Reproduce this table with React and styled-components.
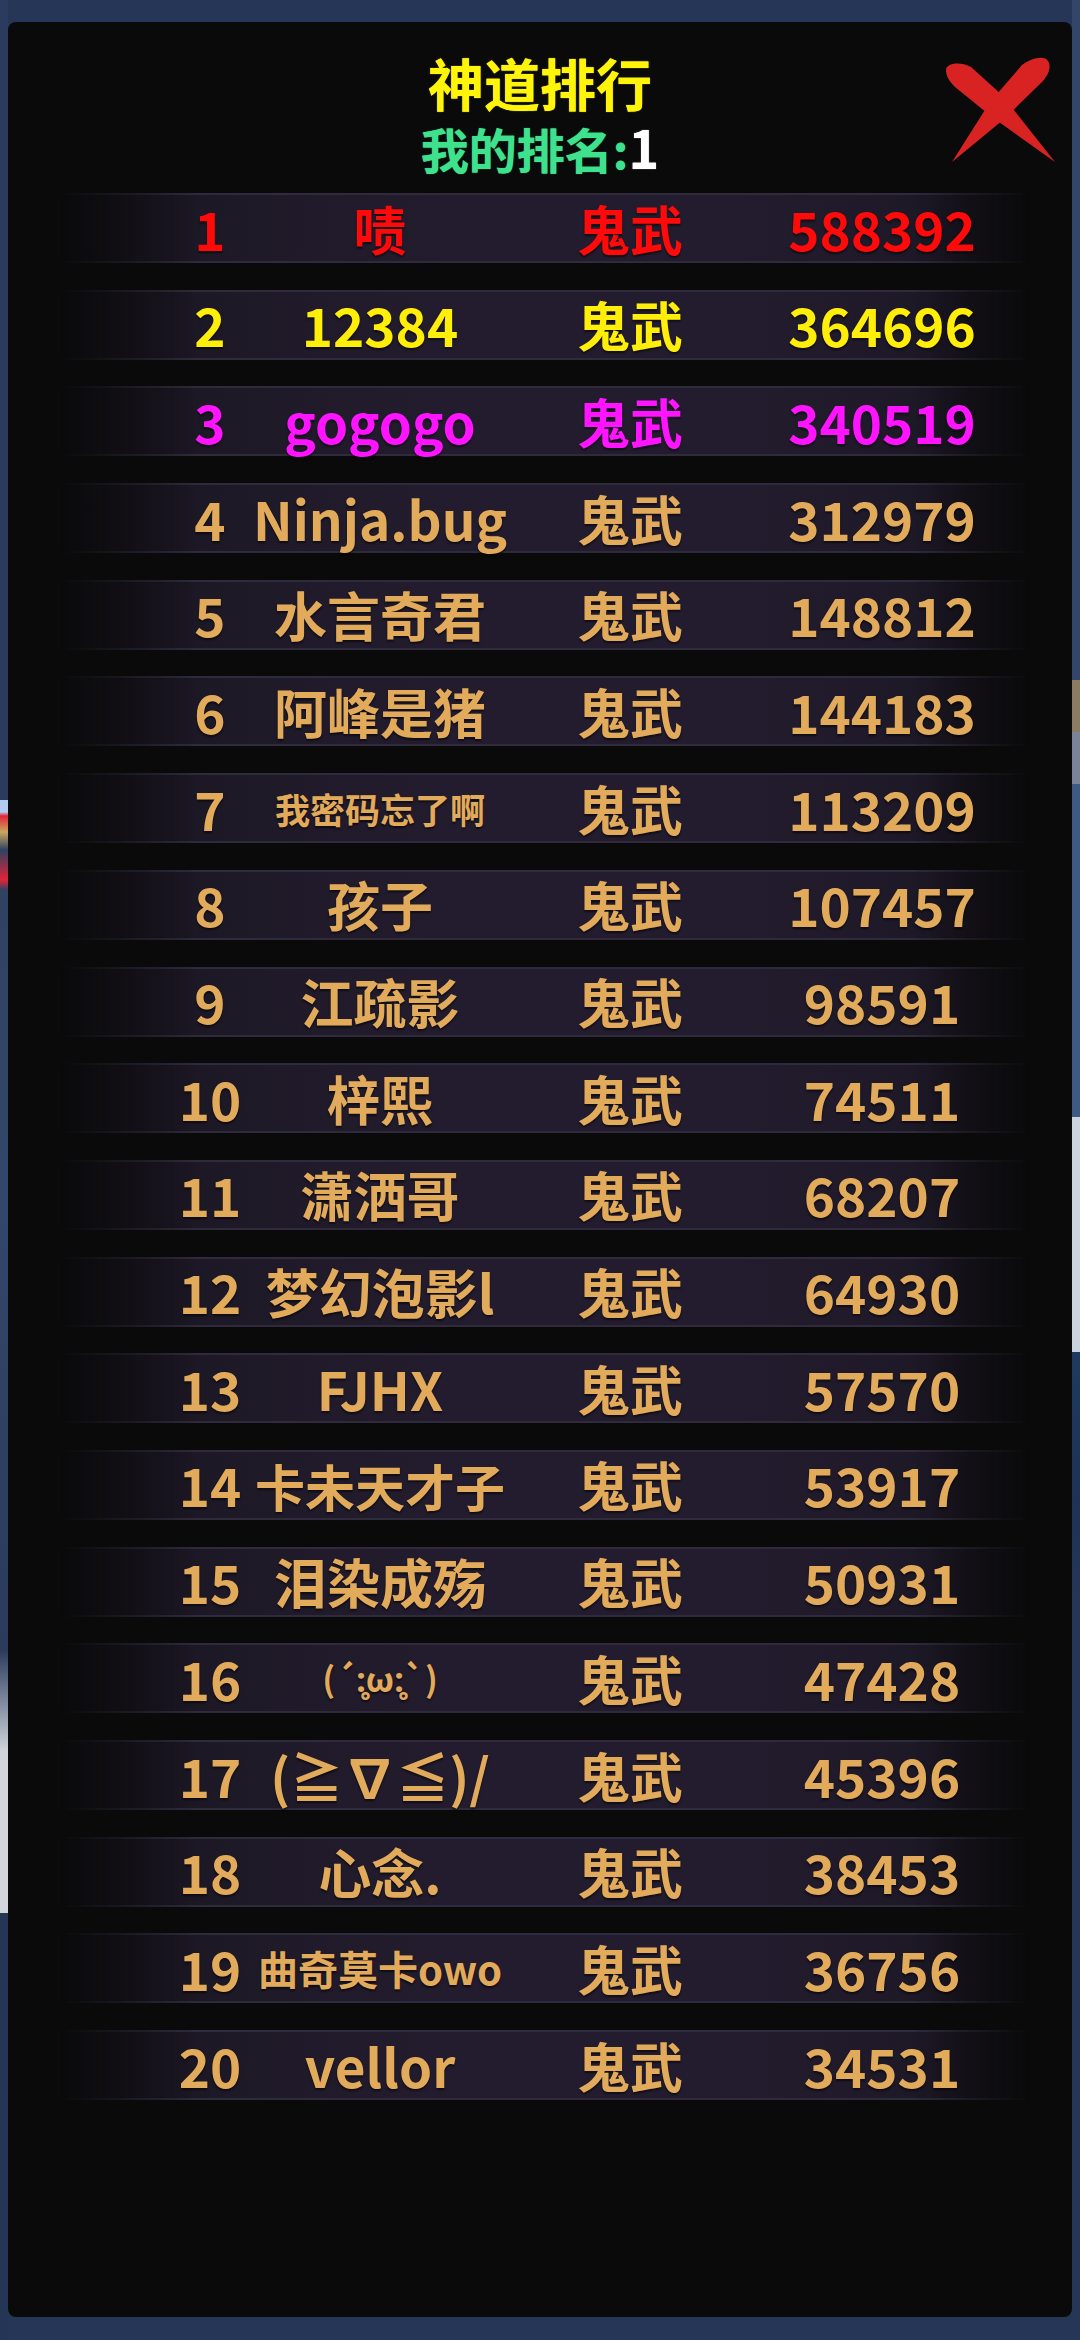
import React from 'react';
import styled, { createGlobalStyle } from 'styled-components';

const GlobalStyle = createGlobalStyle`
  html, body {
    margin: 0;
    padding: 0;
    background: #263656;
  }
  * {
    box-sizing: border-box;
  }
`;

const FONT = `"Noto Sans CJK SC", "Noto Sans", "DejaVu Sans", sans-serif`;

const rows = [
  { rank: 1, name: '啧', score: 588392 },
  { rank: 2, name: '12384', score: 364696 },
  { rank: 3, name: 'gogogo', score: 340519 },
  { rank: 4, name: 'Ninja.bug', score: 312979 },
  { rank: 5, name: '水言奇君', score: 148812 },
  { rank: 6, name: '阿峰是猪', score: 144183 },
  { rank: 7, name: '我密码忘了啊', score: 113209, size: 35 },
  { rank: 8, name: '孩子', score: 107457 },
  { rank: 9, name: '江疏影', score: 98591 },
  { rank: 10, name: '梓熙', score: 74511 },
  { rank: 11, name: '潇洒哥', score: 68207 },
  { rank: 12, name: '梦幻泡影l', score: 64930 },
  { rank: 13, name: 'FJHX', score: 57570 },
  { rank: 14, name: '卡未天才子', score: 53917, size: 50 },
  { rank: 15, name: '泪染成殇', score: 50931 },
  { rank: 16, name: '(´:̥ω:̥`)', score: 47428, size: 34 },
  { rank: 17, name: '(≧∇≦)/', score: 45396 },
  { rank: 18, name: '心念.', score: 38453 },
  { rank: 19, name: '曲奇莫卡owo', score: 36756, size: 40 },
  { rank: 20, name: 'vellor', score: 34531 },
];

const rankColor = (rank) => {
  if (rank === 1) return '#ff0a0a';
  if (rank === 2) return '#ffee0a';
  if (rank === 3) return '#ff14ff';
  return '#e2ab5b';
};

// the game scene peeking out around the dialog
const Scene = styled.div`
  width: 1080px;
  height: 2340px;
  padding: 22px 8px 23px 8px;
  background-color: #263656;
  background-image:
    linear-gradient(
      to bottom,
      #2b3b5d 0px,
      #2b3b5d 800px,
      #b4cbef 800px,
      #b4cbef 812px,
      #e0243a 816px,
      #c9a760 832px,
      #2f4262 850px,
      #e0243a 880px,
      #2f4262 890px,
      #33476a 1200px,
      #2a3b5c 1650px,
      #d2d6dc 1752px,
      #d2d6dc 1913px,
      #243556 1913px,
      #243556 2340px
    ),
    linear-gradient(
      to bottom,
      #33466a 0px,
      #33466a 680px,
      #8a7b62 680px,
      #8a7b62 732px,
      #7b8399 732px,
      #7b8399 784px,
      #3d5a85 784px,
      #3d5a85 1117px,
      #cbd3de 1117px,
      #cbd3de 1352px,
      #1f3a60 1352px,
      #1d3256 1500px,
      #263656 1600px,
      #263656 2340px
    );
  background-size: 8px 2340px, 8px 2340px;
  background-position: 0 0, 1072px 0;
  background-repeat: no-repeat;
`;

const Panel = styled.div`
  position: relative;
  height: 100%;
  border-radius: 8px;
  background: #0a0a0b;
  padding-top: 32px;
  display: flex;
  flex-direction: column;
  align-items: center;
  font-family: ${FONT};
  font-weight: 700;
`;

const Title = styled.div`
  font-size: 56px;
  line-height: 56px;
  color: #fff40a;
  text-shadow: 0 0 1px #fff40a;
`;

const MyRank = styled.div`
  margin-top: 13px;
  font-size: 48px;
  line-height: 48px;
  color: #3fe28c;
  white-space: nowrap;
  text-shadow: 0 0 1px #3fe28c;

  span {
    color: #ffffff;
    font-size: 52px;
    text-shadow: 0 0 1px #ffffff;
  }
`;

const CloseButton = styled.button`
  position: absolute;
  top: 33px;
  right: 14px;
  width: 116px;
  height: 112px;
  padding: 0;
  border: 0;
  background: none;
  cursor: pointer;

  svg {
    display: block;
  }
`;

const Board = styled.div`
  margin-top: 21px;
  width: 970px;
  margin-left: 52px;
  align-self: flex-start;
  display: flex;
  flex-direction: column;
  gap: 26.7px;
`;

const Row = styled.div`
  position: relative;
  height: 70px;
  display: grid;
  grid-template-columns: 120px 220px 280px 224px;
  padding-left: 90px;
  align-items: center;
  color: ${(props) => props.$color};

  /* the faded band behind the row */
  &::before {
    content: '';
    position: absolute;
    inset: 0;
    border-top: 2px solid #2f2a3c;
    border-bottom: 2px solid #2f2a3c;
    background: linear-gradient(
      to right,
      #17131c 0%,
      #1e1927 18%,
      #231c2e 40%,
      #231c2e 70%,
      #1d1826 90%,
      #15121a 100%
    );
    -webkit-mask-image: linear-gradient(to right, transparent 0%, #000 14%, #000 88%, transparent 100%);
    mask-image: linear-gradient(to right, transparent 0%, #000 14%, #000 88%, transparent 100%);
  }
`;

const Cell = styled.div`
  position: relative;
  display: flex;
  justify-content: center;
  align-items: center;
  white-space: nowrap;
  font-size: ${(props) => props.$size || 53}px;
  line-height: 1;
  text-shadow: 0 2px 2px rgba(0, 0, 0, 0.55);
`;

const CloseIcon = () => (
  <svg width="116" height="112" viewBox="12 15 116 112">
    <path
      d="M16 30 C16 23 30 21 41 27 L72 55 L125 122 L62 77 L25 47 C19 41 16 36 16 30 Z"
      fill="#d92323"
    />
    <path
      d="M118 21 C115 15 101 18 92 25 L60 62 L22 122 L73 80 L112 42 C120 33 121 26 118 21 Z"
      fill="#d92323"
    />
  </svg>
);

const App = () => {
  return (
    <>
      <GlobalStyle />
      <Scene>
        <Panel>
          <Title>神道排行</Title>
          <MyRank>
            我的排名:<span>1</span>
          </MyRank>
          <CloseButton aria-label="关闭">
            <CloseIcon />
          </CloseButton>
          <Board>
            {rows.map((row) => (
              <Row key={row.rank} $color={rankColor(row.rank)}>
                <Cell>{row.rank}</Cell>
                <Cell $size={row.size}>{row.name}</Cell>
                <Cell>鬼武</Cell>
                <Cell>{row.score}</Cell>
              </Row>
            ))}
          </Board>
        </Panel>
      </Scene>
    </>
  );
};

export default App;
